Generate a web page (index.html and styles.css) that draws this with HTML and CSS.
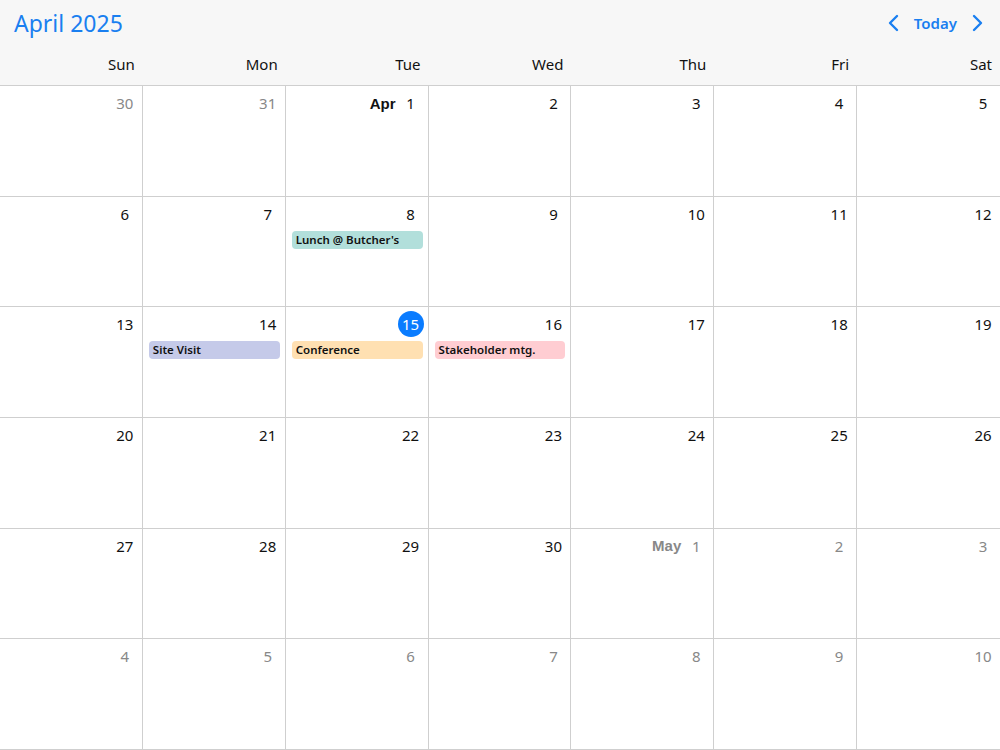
FILE: index.html
```html
<!DOCTYPE html>
<html>
<head>
<meta charset="utf-8">
<link rel="stylesheet" href="styles.css">
</head>
<body>
<div class="cal">
  <div class="head">
    <div class="toolbar">
      <div class="title">April 2025</div>
      <div class="nav">
        <svg class="chev" width="14" height="18" viewBox="0 0 14 18"><path d="M10 2 L3 9 L10 16" fill="none" stroke="#1a7ff0" stroke-width="2.4" stroke-linecap="round" stroke-linejoin="round"/></svg>
        <span class="today-btn">Today</span>
        <svg class="chev" width="14" height="18" viewBox="0 0 14 18"><path d="M4 2 L11 9 L4 16" fill="none" stroke="#1a7ff0" stroke-width="2.4" stroke-linecap="round" stroke-linejoin="round"/></svg>
      </div>
    </div>
    <div class="dows">
      <div>Sun</div><div>Mon</div><div>Tue</div><div>Wed</div><div>Thu</div><div>Fri</div><div>Sat</div>
    </div>
  </div>
  <div class="grid">
    <div class="cell"><div class="num other"><span class="d">30</span></div></div>
    <div class="cell"><div class="num other"><span class="d">31</span></div></div>
    <div class="cell"><div class="num"><b class="mon">Apr</b><span class="d">1</span></div></div>
    <div class="cell"><div class="num"><span class="d">2</span></div></div>
    <div class="cell"><div class="num"><span class="d">3</span></div></div>
    <div class="cell"><div class="num"><span class="d">4</span></div></div>
    <div class="cell"><div class="num"><span class="d">5</span></div></div>

    <div class="cell"><div class="num"><span class="d">6</span></div></div>
    <div class="cell"><div class="num"><span class="d">7</span></div></div>
    <div class="cell"><div class="num"><span class="d">8</span></div><div class="ev teal">Lunch @ Butcher's</div></div>
    <div class="cell"><div class="num"><span class="d">9</span></div></div>
    <div class="cell"><div class="num"><span class="d">10</span></div></div>
    <div class="cell"><div class="num"><span class="d">11</span></div></div>
    <div class="cell"><div class="num"><span class="d">12</span></div></div>

    <div class="cell"><div class="num"><span class="d">13</span></div></div>
    <div class="cell"><div class="num"><span class="d">14</span></div><div class="ev indigo">Site Visit</div></div>
    <div class="cell"><div class="num"><span class="d today">15</span></div><div class="ev orange">Conference</div></div>
    <div class="cell"><div class="num"><span class="d">16</span></div><div class="ev red">Stakeholder mtg.</div></div>
    <div class="cell"><div class="num"><span class="d">17</span></div></div>
    <div class="cell"><div class="num"><span class="d">18</span></div></div>
    <div class="cell"><div class="num"><span class="d">19</span></div></div>

    <div class="cell"><div class="num"><span class="d">20</span></div></div>
    <div class="cell"><div class="num"><span class="d">21</span></div></div>
    <div class="cell"><div class="num"><span class="d">22</span></div></div>
    <div class="cell"><div class="num"><span class="d">23</span></div></div>
    <div class="cell"><div class="num"><span class="d">24</span></div></div>
    <div class="cell"><div class="num"><span class="d">25</span></div></div>
    <div class="cell"><div class="num"><span class="d">26</span></div></div>

    <div class="cell"><div class="num"><span class="d">27</span></div></div>
    <div class="cell"><div class="num"><span class="d">28</span></div></div>
    <div class="cell"><div class="num"><span class="d">29</span></div></div>
    <div class="cell"><div class="num"><span class="d">30</span></div></div>
    <div class="cell"><div class="num other"><b class="mon">May</b><span class="d">1</span></div></div>
    <div class="cell"><div class="num other"><span class="d">2</span></div></div>
    <div class="cell"><div class="num other"><span class="d">3</span></div></div>

    <div class="cell"><div class="num other"><span class="d">4</span></div></div>
    <div class="cell"><div class="num other"><span class="d">5</span></div></div>
    <div class="cell"><div class="num other"><span class="d">6</span></div></div>
    <div class="cell"><div class="num other"><span class="d">7</span></div></div>
    <div class="cell"><div class="num other"><span class="d">8</span></div></div>
    <div class="cell"><div class="num other"><span class="d">9</span></div></div>
    <div class="cell"><div class="num other"><span class="d">10</span></div></div>
  </div>
</div>
</body>
</html>
```
FILE: styles.css
```css
html, body {
  margin: 0;
  padding: 0;
  background: #fff;
}
body {
  font-family: "Noto Sans", "Open Sans", sans-serif;
  color: #111;
  width: 1000px;
  height: 750px;
  overflow: hidden;
}
.cal {
  display: flex;
  flex-direction: column;
  height: 750px;
}
.head {
  background: #f7f7f7;
  height: 86px;
  border-bottom: 1px solid #cfcfcf;
  box-sizing: border-box;
  display: flex;
  flex-direction: column;
}
.toolbar {
  display: flex;
  align-items: center;
  justify-content: space-between;
  height: 46px;
  padding: 0 16px 0 14px;
}
.title {
  color: #1a7ff0;
  font-size: 23px;
}
.nav {
  display: flex;
  align-items: center;
  gap: 13px;
}
.today-btn {
  color: #1a7ff0;
  font-weight: 600;
  font-size: 15px;
}
.dows {
  display: grid;
  grid-template-columns: repeat(7, 1fr);
  font-size: 15px;
}
.dows div {
  text-align: right;
  padding-right: 8px;
  line-height: 36px;
}
.grid {
  flex: 1;
  display: grid;
  grid-template-columns: repeat(7, 1fr);
  grid-template-rows: repeat(6, 1fr);
}
.cell {
  border-right: 1px solid #cfcfcf;
  border-bottom: 1px solid #cfcfcf;
  display: flex;
  flex-direction: column;
  padding: 4px 5px 0 6px;
  min-width: 0;
}
.cell:nth-child(7n) {
  border-right: none;
}
.num {
  font-size: 15px;
  height: 26px;
  display: flex;
  justify-content: flex-end;
  align-items: center;
  margin-right: -1px;
}
.num.other {
  color: #888;
}
.d {
  min-width: 26px;
  height: 26px;
  line-height: 26px;
  text-align: center;
}
.mon {
  font-family: "Liberation Sans", Arial, sans-serif;
  font-weight: 700;
  margin-right: 2px;
  font-size: 15px;
}
.today {
  background: #0a7cff;
  color: #fff;
  border-radius: 50%;
}
.ev {
  margin-top: 4px;
  height: 18px;
  line-height: 18px;
  border-radius: 4px;
  font-size: 11.5px;
  font-weight: 600;
  padding-left: 4px;
  color: #111;
  white-space: nowrap;
  overflow: hidden;
}
.teal { background: #b2dfdb; }
.indigo { background: #c5cae9; }
.orange { background: #ffe0b2; }
.red { background: #ffcdd2; }
```
